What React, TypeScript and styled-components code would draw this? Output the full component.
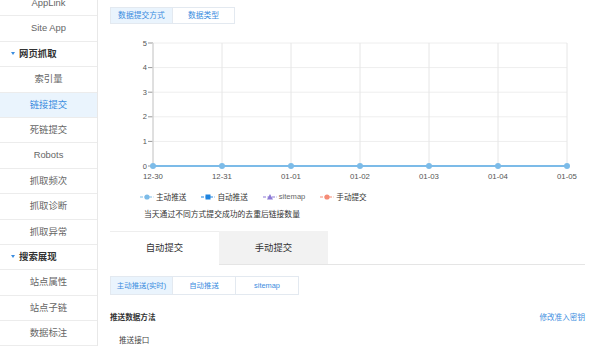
import styled, { createGlobalStyle } from 'styled-components';

const GlobalStyle = createGlobalStyle`
  html, body {
    margin: 0;
    padding: 0;
    background: #fff;
    overflow: hidden;
  }
  body {
    font-family: "Liberation Sans", "Noto Sans CJK SC", sans-serif;
    color: #333;
  }
`;

const Page = styled.div`
  display: flex;
  width: 600px;
  height: 346px;
  overflow: hidden;
`;

const Sidebar = styled.ul`
  width: 97px;
  flex-shrink: 0;
  margin: -9px 0 0 0;
  padding: 0;
  list-style: none;
  border-right: 1px solid #e8e8e8;
  background: #fff;
`;

const NavItem = styled.li<{ $active?: boolean; $group?: boolean }>`
  height: 24.4px;
  line-height: 24.4px;
  border-bottom: 1px solid #ececec;
  font-size: 9.4px;
  text-align: ${(p) => (p.$group ? 'left' : 'center')};
  padding-left: ${(p) => (p.$group ? '11px' : '0')};
  color: ${(p) => (p.$active ? '#3b8de0' : p.$group ? '#333' : '#666')};
  background: ${(p) => (p.$active ? '#eaf4fd' : 'transparent')};
  font-weight: ${(p) => (p.$group ? 'bold' : 'normal')};
  white-space: nowrap;
`;

const Caret = styled.span`
  display: inline-block;
  width: 0;
  height: 0;
  border-left: 2.5px solid transparent;
  border-right: 2.5px solid transparent;
  border-top: 3px solid #3b8de0;
  margin-right: 4px;
  vertical-align: middle;
  position: relative;
  top: -1px;
`;

const Main = styled.div`
  flex: 1;
  padding: 7px 15px 0 12px;
  display: flex;
  flex-direction: column;
`;

const SmallTabs = styled.div`
  display: flex;
`;

const SmallTab = styled.div<{ $active?: boolean; $w: number }>`
  width: ${(p) => p.$w}px;
  height: 17px;
  box-sizing: border-box;
  border: 1px solid #e3e9f0;
  margin-left: -1px;
  &:first-child {
    margin-left: 0;
  }
  font-size: 7.8px;
  line-height: 15px;
  text-align: center;
  color: #3b8de0;
  background: ${(p) => (p.$active ? '#eaf4fd' : '#fff')};
`;

const ChartSvg = styled.svg`
  display: block;
  margin-top: 11px;
`;

const Legend = styled.div`
  display: flex;
  align-items: center;
  margin-top: 6px;
  padding-left: 30px;
  gap: 15px;
  font-size: 7.6px;
  color: #333;
`;

const LegendItem = styled.div`
  display: flex;
  align-items: center;
  gap: 2px;
`;

const Caption = styled.div`
  margin-top: 6px;
  padding-left: 34px;
  font-size: 7.8px;
  color: #333;
`;

const BigTabs = styled.div`
  display: flex;
  margin-top: 12px;
  border-bottom: 1px solid #e5e5e5;
`;

const BigTab = styled.div<{ $active?: boolean }>`
  width: 109px;
  height: 32px;
  line-height: 32px;
  text-align: center;
  font-size: 9.4px;
  color: #333;
  background: ${(p) => (p.$active ? '#fff' : '#f2f2f2')};
  border-top: 1px solid ${(p) => (p.$active ? '#eee' : '#f2f2f2')};
  margin-bottom: -1px;
  border-bottom: 1px solid ${(p) => (p.$active ? '#fff' : '#e5e5e5')};
`;

const SubTabs = styled(SmallTabs)`
  margin-top: 11px;
`;

const SubTab = styled(SmallTab)`
  height: 19px;
  line-height: 17px;
  font-size: 7.4px;
`;

const MethodRow = styled.div`
  display: flex;
  justify-content: space-between;
  align-items: center;
  margin-top: 16px;
  font-size: 7.6px;
`;

const MethodTitle = styled.div`
  color: #333;
  font-weight: bold;
`;

const KeyLink = styled.a`
  color: #3b8de0;
  text-decoration: none;
`;

const Interface = styled.div`
  margin-top: 12px;
  padding-left: 9px;
  font-size: 7.6px;
  color: #444;
`;

const xs = [153, 222, 291, 360, 429, 498, 567];
const dates = ['12-30', '12-31', '01-01', '01-02', '01-03', '01-04', '01-05'];
const left = 110;
const top = 35;

function Chart() {
  const yTop = 43 - top;
  const yZero = 166 - top;
  const step = (yZero - yTop) / 5;
  return (
    <ChartSvg width={475} height={150} viewBox="0 0 475 150">
      {[0, 1, 2, 3, 4, 5].map((i) => {
        const y = yZero - i * step;
        return (
          <g key={i}>
            <line x1={xs[0] - left} x2={xs[6] - left} y1={y} y2={y} stroke="#eeeeee" strokeWidth={1} />
            <line x1={xs[0] - left - 5} x2={xs[0] - left} y1={y} y2={y} stroke="#999" strokeWidth={1} />
            <text x={xs[0] - left - 6} y={y + 2.5} fontSize={7.5} fill="#555" textAnchor="end" fontFamily="Liberation Sans, sans-serif">
              {i}
            </text>
          </g>
        );
      })}
      {xs.map((x, i) => (
        <g key={x}>
          <line x1={x - left} x2={x - left} y1={yTop} y2={yZero} stroke="#e6e6e6" strokeWidth={1} />
          <text x={x - left} y={yZero + 13} fontSize={7.8} fill="#555" textAnchor="middle" fontFamily="Liberation Sans, sans-serif">
            {dates[i]}
          </text>
        </g>
      ))}
      <line x1={xs[0] - left} x2={xs[0] - left} y1={yTop} y2={yZero} stroke="#ccc" strokeWidth={1} />
      <line x1={xs[0] - left} x2={xs[6] - left} y1={yZero} y2={yZero} stroke="#7cbbe8" strokeWidth={2} />
      {xs.map((x) => (
        <circle key={x} cx={x - left} cy={yZero} r={3} fill="#7cbbe8" />
      ))}
    </ChartSvg>
  );
}

function Marker({ kind, color }: { kind: 'circle' | 'square' | 'triangle'; color: string }) {
  return (
    <svg width={14} height={8} viewBox="0 0 14 8">
      <line x1={0} x2={14} y1={4} y2={4} stroke={color} strokeWidth={1.2} strokeDasharray="3 1.5" />
      {kind === 'circle' && <circle cx={7} cy={4} r={2.6} fill={color} />}
      {kind === 'square' && <rect x={4.5} y={1.5} width={5} height={5} fill={color} />}
      {kind === 'triangle' && <polygon points="7,1 10,6.5 4,6.5" fill={color} />}
    </svg>
  );
}

const navItems: { label: string; active?: boolean; group?: boolean }[] = [
  { label: 'AppLink' },
  { label: 'Site App' },
  { label: '网页抓取', group: true },
  { label: '索引量' },
  { label: '链接提交', active: true },
  { label: '死链提交' },
  { label: 'Robots' },
  { label: '抓取频次' },
  { label: '抓取诊断' },
  { label: '抓取异常' },
  { label: '搜索展现', group: true },
  { label: '站点属性' },
  { label: '站点子链' },
  { label: '数据标注' },
];

export default function App() {
  return (
    <Page>
      <GlobalStyle />
      <Sidebar>
        {navItems.map((n) => (
          <NavItem key={n.label} $active={n.active} $group={n.group}>
            {n.group && <Caret />}
            {n.label}
          </NavItem>
        ))}
      </Sidebar>
      <Main>
        <SmallTabs>
          <SmallTab $w={63} $active>数据提交方式</SmallTab>
          <SmallTab $w={63}>数据类型</SmallTab>
        </SmallTabs>
        <Chart />
        <Legend>
          <LegendItem>
            <Marker kind="circle" color="#7cbbe8" />
            主动推送
          </LegendItem>
          <LegendItem>
            <Marker kind="square" color="#1f84e0" />
            自动推送
          </LegendItem>
          <LegendItem>
            <Marker kind="triangle" color="#8d7bd6" />
            <span style={{ color: '#666' }}>sitemap</span>
          </LegendItem>
          <LegendItem>
            <Marker kind="circle" color="#f58b76" />
            手动提交
          </LegendItem>
        </Legend>
        <Caption>当天通过不同方式提交成功的去重后链接数量</Caption>
        <BigTabs>
          <BigTab $active>自动提交</BigTab>
          <BigTab>手动提交</BigTab>
        </BigTabs>
        <SubTabs>
          <SubTab $w={63} $active>主动推送(实时)</SubTab>
          <SubTab $w={64}>自动推送</SubTab>
          <SubTab $w={64}>sitemap</SubTab>
        </SubTabs>
        <MethodRow>
          <MethodTitle>推送数据方法</MethodTitle>
          <KeyLink>修改准入密钥</KeyLink>
        </MethodRow>
        <Interface>推送接口</Interface>
      </Main>
    </Page>
  );
}
